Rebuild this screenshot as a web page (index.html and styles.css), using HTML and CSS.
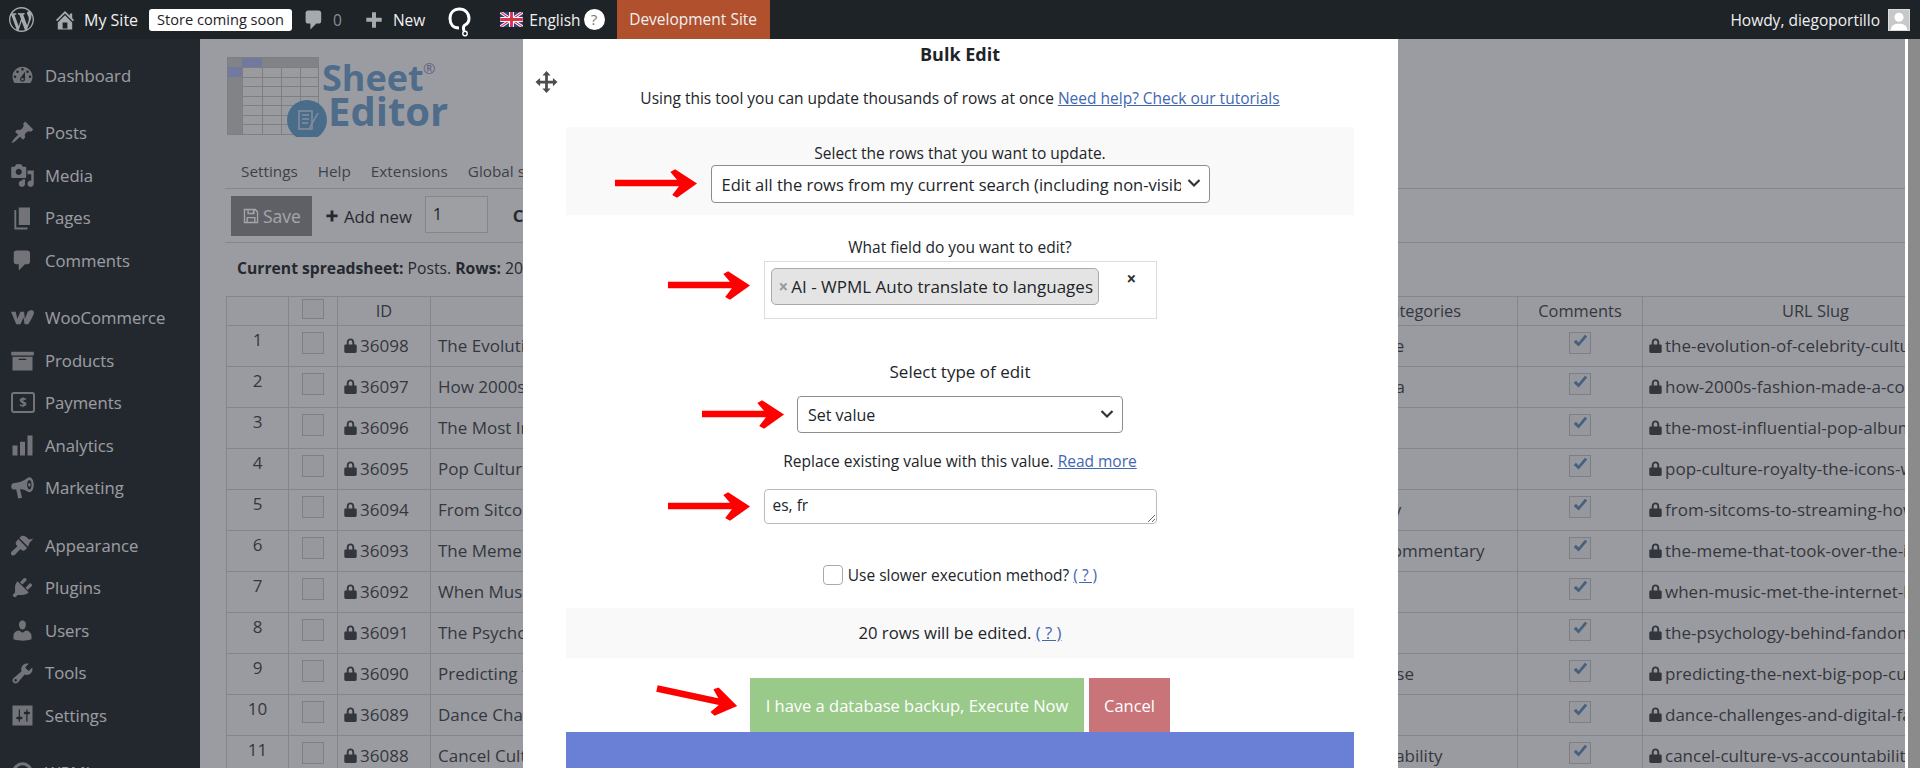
FILE: index.html
```html
<!DOCTYPE html>
<html lang="en">
<head>
<meta charset="utf-8">
<title>Bulk Edit</title>
<link rel="stylesheet" href="styles.css">
</head>
<body>
<svg class="defs" aria-hidden="true">
  <defs>
    <symbol id="i-wp" viewBox="0 0 20 20"><path d="M20 10c0-5.51-4.49-10-10-10C4.48 0 0 4.49 0 10c0 5.52 4.48 10 10 10 5.51 0 10-4.48 10-10zM7.78 15.37L4.37 6.22c.55-.02 1.17-.08 1.17-.08.5-.06.44-1.13-.06-1.11 0 0-1.45.11-2.37.11-.18 0-.37 0-.58-.01C4.12 2.69 6.87 1.11 10 1.11c2.33 0 4.45.87 6.05 2.34-.68-.11-1.65.39-1.65 1.58 0 .74.45 1.36.9 2.1.35.61.55 1.36.55 2.46 0 1.49-1.4 5-1.4 5l-3.03-8.37c.54-.02.82-.17.82-.17.5-.05.44-1.25-.06-1.22 0 0-1.44.12-2.38.12-.87 0-2.33-.12-2.33-.12-.5-.03-.56 1.2-.06 1.22l.92.08 1.26 3.41zM17.41 10c.24-.64.74-1.87.43-4.25.7 1.29 1.05 2.71 1.05 4.25 0 3.29-1.73 6.24-4.4 7.78.97-2.59 1.94-5.2 2.92-7.78zM6.1 18.09C3.12 16.65 1.11 13.53 1.11 10c0-1.3.23-2.48.72-3.59C3.25 10.3 4.67 14.2 6.1 18.09zm4.03-6.63l2.58 6.98c-.86.29-1.76.45-2.71.45-.79 0-1.57-.11-2.29-.33.81-2.38 1.62-4.74 2.42-7.1z"/></symbol>
    <symbol id="i-home" viewBox="0 0 20 20"><path d="M16 8.5l1.53 1.53-1.06 1.06L10 4.62l-6.47 6.47-1.06-1.06L10 2.5l4 4v-2h2v4zm-6-2.46l6 5.99V18H4v-5.97zM12 17v-5H8v5h4z"/></symbol>
    <symbol id="i-comment" viewBox="0 0 20 20"><path d="M5 2h9c1.1 0 2 .9 2 2v7c0 1.1-.9 2-2 2h-2l-5 5v-5H5c-1.1 0-2-.9-2-2V4c0-1.1.9-2 2-2z"/></symbol>
    <symbol id="i-plus" viewBox="0 0 20 20"><path d="M17 8v3.5h-5.2V17H8.2v-5.500H3V8h5.200V3h3.600v5z"/></symbol>
    <symbol id="i-dash" viewBox="0 0 20 20"><path d="M3.760 16h12.480c1.100-1.370 1.760-3.110 1.760-5 0-4.420-3.580-8-8-8s-8 3.580-8 8c0 1.890.660 3.630 1.760 5zM10 4c.550 0 1 .450 1 1s-.450 1-1 1-1-.450-1-1 .450-1 1-1zM6 6c.550 0 1 .450 1 1s-.450 1-1 1-1-.450-1-1 .450-1 1-1zm8 0c.550 0 1 .450 1 1s-.450 1-1 1-1-.450-1-1 .450-1 1-1zm-5.370 5.550L12 7v6c0 1.100-.900 2-2 2s-2-.900-2-2c0-.570.240-1.080.630-1.450zM4 10c.550 0 1 .450 1 1s-.450 1-1 1-1-.450-1-1 .450-1 1-1zm12 0c.550 0 1 .450 1 1s-.450 1-1 1-1-.450-1-1 .450-1 1-1zm-5 3c0-.550-.450-1-1-1s-1 .450-1 1 .450 1 1 1 1-.450 1-1z"/></symbol>
    <symbol id="i-pin" viewBox="0 0 20 20"><path d="M10.440 3.020l1.820-1.820 6.360 6.350-1.830 1.820c-1.050-.680-2.480-.570-3.410.360l-.750.750c-.920.930-1.040 2.350-.350 3.410l-1.830 1.820-2.410-2.410-2.800 2.790c-.420.420-3.380 2.710-3.800 2.290s1.860-3.390 2.280-3.810l2.790-2.790L4.100 9.360l1.830-1.820c1.050.690 2.480.570 3.400-.360l.750-.750c.930-.920 1.050-2.350.360-3.410z"/></symbol>
    <symbol id="i-media" viewBox="0 0 20 20"><path d="M13 11V4c0-.550-.450-1-1-1h-1.670L9 1H5L3.670 3H2c-.550 0-1 .450-1 1v7c0 .550.450 1 1 1h10c.550 0 1-.450 1-1zM7 4.500c1.380 0 2.500 1.120 2.500 2.500S8.380 9.500 7 9.500 4.500 8.380 4.500 7 5.620 4.500 7 4.500zM14 6h5v10.500c0 1.380-1.120 2.500-2.500 2.500S14 17.880 14 16.500s1.120-2.500 2.500-2.500c.170 0 .340.020.500.050V9h-3V6zm-4 8.050V13h2v3.500c0 1.380-1.120 2.500-2.500 2.500S7 17.880 7 16.500 8.120 14 9.500 14c.170 0 .340.020.500.050z"/></symbol>
    <symbol id="i-pages" viewBox="0 0 20 20"><path d="M7 2h9v14H7V2zM5 4v14h9v1.500H3.500V4H5z"/></symbol>
    <symbol id="i-woo" viewBox="0 0 24 16"><path d="M1 2.500h4.500l1.500 7 3-7h3.500l.8 7 2.700-7c1.500-2 5.500-2.300 6 .3.300 2-3 8-5.500 11.700h-3.500l-1-6.500-3 6.500H6z"/></symbol>
    <symbol id="i-box" viewBox="0 0 20 20"><path d="M19 3v3H1V3h18zM2 7h16v11H2V7zm11 2.500V8.500H7v1h6z"/></symbol>
    <symbol id="i-chart" viewBox="0 0 20 20"><path d="M18 18V2h-4v16h4zm-6 0V7H8v11h4zm-6 0v-8H2v8h4z"/></symbol>
    <symbol id="i-mega" viewBox="0 0 20 20"><path d="M15.500 1c2 0 3.500 2.800 3.500 6s-1.500 6-3.500 6c-.700 0-1.300-.300-1.800-.800C12.300 11 9.800 10.500 8 10.500l1.600 6.800-3 .700-1.600-7.300-1.500.1C1.800 10.800 1 10 1 8.300s.8-2.600 2.500-2.800c3.500-.200 7-1.500 10-3.600.600-.600 1.300-.900 2-.900zm0 2.200c-1 0-1.800 1.700-1.800 3.800s.8 3.800 1.800 3.800 1.800-1.700 1.800-3.800-.8-3.800-1.800-3.800zm0 2.300c.600 0 1 .700 1 1.500s-.4 1.500-1 1.500-1-.7-1-1.500.4-1.500 1-1.500z"/></symbol>
    <symbol id="i-brush" viewBox="0 0 20 20"><path d="M14.500 11L7.400 4l1.500-1.500c.5-.6 2.300-.5 3.500.3 1.200.8 2.600 2.300 2.600 2.300l3.500-.6-3 3.500zM6.600 4.800l7.100 7.100-1.700 1.700c-.8.800-2 .8-2.800 0l-.9-.9-4.300 4.700c-1 1-2.500.5-2.900-.1-.5-.8-.5-1.800.3-2.500l4.600-4.300-.9-.9c-.7-.8-.7-2 0-2.800z"/></symbol>
    <symbol id="i-plug" viewBox="0 0 20 20"><path d="M13.110 4.360L9.870 7.600 8 5.730l3.240-3.240c.350-.340 1.050-.200 1.560.320.520.510.660 1.210.310 1.550zm-8 1.770l.910-1.120 9.010 9.010-1.190.840c-.710.710-2.630 1.160-3.820 1.160H6.140L4.900 17.260c-.590.590-1.540.590-2.120 0-.590-.580-.590-1.530 0-2.120l1.240-1.240v-3.880c0-1.130.400-3.190 1.090-3.890zm7.260 3.970l3.240-3.240c.340-.350 1.040-.210 1.550.310.520.510.660 1.210.31 1.550l-3.240 3.250z"/></symbol>
    <symbol id="i-user" viewBox="0 0 20 20"><path d="M10 9.250c-2.270 0-2.730-3.440-2.730-3.440C7 4.020 7.820 2 9.970 2c2.160 0 2.980 2.020 2.710 3.810 0 0-.410 3.440-2.680 3.440zm0 2.570L12.720 10c2.390 0 4.520 2.330 4.520 4.530v2.490s-3.650 1.130-7.240 1.130c-3.650 0-7.240-1.130-7.240-1.130v-2.490c0-2.250 1.940-4.480 4.470-4.480z"/></symbol>
    <symbol id="i-wrench" viewBox="0 0 20 20"><path d="M16.680 9.770c-1.340 1.340-3.300 1.670-4.950.990l-5.410 6.520c-.990.990-2.590.990-3.580 0s-.990-2.590 0-3.570l6.520-5.420c-.680-1.650-.350-3.610.990-4.950 1.280-1.280 3.120-1.620 4.720-1.060l-2.890 2.890 2.820 2.820 2.860-2.870c.530 1.580.180 3.390-1.080 4.670zM3.810 16.210c.400.390 1.040.390 1.430 0 .400-.400.400-1.040 0-1.430-.390-.400-1.030-.400-1.430 0-.390.390-.390 1.030 0 1.430z"/></symbol>
    <symbol id="i-sliders" viewBox="0 0 20 20"><path d="M18 18V2H2v16h16zM8 11h1c.550 0 1 .450 1 1s-.450 1-1 1H8v1.500c0 .280-.220.500-.500.500s-.500-.220-.500-.500V13H6c-.550 0-1-.450-1-1s.450-1 1-1h1V5.500c0-.280.220-.500.500-.500s.500.220.500.500V11zm5-2h-1c-.550 0-1-.450-1-1s.450-1 1-1h1V5.500c0-.280.220-.500.500-.500s.500.220.500.500V7h1c.550 0 1 .450 1 1s-.450 1-1 1h-1v5.500c0 .280-.220.500-.500.500s-.500-.220-.500-.500V9z"/></symbol>
    <symbol id="i-lock" viewBox="0 0 12 14"><path d="M2.500 6V4.200C2.500 2 4 .5 6 .5s3.500 1.500 3.500 3.700V6h1c.8 0 1.300.5 1.300 1.200v5.500c0 .8-.5 1.300-1.300 1.300h-9C.7 14 .2 13.500.2 12.700V7.200C.2 6.500.7 6 1.500 6zm1.800 0h3.400V4.200C7.700 3 7 2.200 6 2.200S4.300 3 4.300 4.200z"/></symbol>
    <symbol id="i-check" viewBox="0 0 20 20"><path d="M3 10l2.500-2.500 3 3L15.500 2 18 4 8.500 15z"/></symbol>
    <symbol id="i-save" viewBox="0 0 20 20"><path d="M2 2h13l3 3v13H2V2zm1.500 1.500v13H5V11h10v5.500h1.500V5.700L14.300 3.500H14V8H6V3.500H3.500zM7.500 3.500v3H12v-3H7.500zM6.500 12.500v4h7v-4h-7z"/></symbol>
    <symbol id="i-move" viewBox="0 0 24 24"><path d="M12 0l4.500 5H13.500v5.500H19V7.500l5 4.500-5 4.500v-3h-5.500V19h3L12 24l-4.500-5h3v-5.500H5v3L0 12l5-4.500v3h5.500V5h-3z"/></symbol>
    <symbol id="i-chev" viewBox="0 0 14 10"><path d="M1.500 2l5.500 5.500L12.500 2" fill="none" stroke="currentColor" stroke-width="2.200"/></symbol>
    <symbol id="i-arrow" viewBox="0 0 88 30"><path d="M1 11h65L59 3l5-3 23 15-21 15-5-3 7-9H1z"/></symbol>
  </defs>
</svg>

<header class="adminbar">
  <svg class="ab-wp"><use href="#i-wp"/></svg>
  <svg class="ab-home"><use href="#i-home"/></svg>
  <span class="ab-site">My Site</span>
  <span class="ab-store">Store coming soon</span>
  <svg class="ab-comment"><use href="#i-comment"/></svg>
  <span class="ab-count">0</span>
  <svg class="ab-plus"><use href="#i-plus"/></svg>
  <span class="ab-new">New</span>
  <svg class="ab-wpml" viewBox="0 0 24 30"><path d="M11 21C5 21 2 17 2 11.500 2 5.500 6 2 11.500 2 17 2 21 6 21 11.500c0 3.500-2 5.500-4 6.500-1.500 1-2 3-1 6" fill="none" stroke="#fff" stroke-width="3"/><circle cx="17" cy="26.500" r="2.200" fill="none" stroke="#fff" stroke-width="1.400"/></svg>
  <svg class="ab-flag" viewBox="0 0 24 16"><rect width="24" height="16" fill="#2b3f8f"/><path d="M0 0l24 16M24 0L0 16" stroke="#fff" stroke-width="3.200"/><path d="M0 0l24 16M24 0L0 16" stroke="#d8324a" stroke-width="1.200"/><path d="M12 0v16M0 8h24" stroke="#fff" stroke-width="5.200"/><path d="M12 0v16M0 8h24" stroke="#d8324a" stroke-width="3"/></svg>
  <span class="ab-lang">English</span>
  <span class="ab-help">?</span>
  <span class="ab-dev">Development Site</span>
  <span class="ab-howdy">Howdy, diegoportillo</span>
  <span class="ab-avatar"><svg viewBox="0 0 22 22"><circle cx="11" cy="8" r="5" fill="#fff"/><path d="M2 22c0-5 4-7 9-7s9 2 9 7z" fill="#fff"/></svg></span>
</header>

<div class="main">
  <nav class="sidebar">
    <a class="menu-item"><svg><use href="#i-dash"/></svg>Dashboard</a>
    <div class="menu-sep"></div>
    <a class="menu-item"><svg><use href="#i-pin"/></svg>Posts</a>
    <a class="menu-item"><svg><use href="#i-media"/></svg>Media</a>
    <a class="menu-item"><svg><use href="#i-pages"/></svg>Pages</a>
    <a class="menu-item"><svg><use href="#i-comment"/></svg>Comments</a>
    <div class="menu-sep"></div>
    <a class="menu-item"><svg><use href="#i-woo"/></svg>WooCommerce</a>
    <a class="menu-item"><svg><use href="#i-box"/></svg>Products</a>
    <a class="menu-item"><span class="pay-icon">$</span>Payments</a>
    <a class="menu-item"><svg><use href="#i-chart"/></svg>Analytics</a>
    <a class="menu-item"><svg><use href="#i-mega"/></svg>Marketing</a>
    <div class="menu-sep"></div>
    <a class="menu-item"><svg><use href="#i-brush"/></svg>Appearance</a>
    <a class="menu-item"><svg><use href="#i-plug"/></svg>Plugins</a>
    <a class="menu-item"><svg><use href="#i-user"/></svg>Users</a>
    <a class="menu-item"><svg><use href="#i-wrench"/></svg>Tools</a>
    <a class="menu-item"><svg><use href="#i-sliders"/></svg>Settings</a>
    <div class="menu-sep"></div>
    <a class="menu-item"><svg viewBox="0 0 20 20"><circle cx="10" cy="10" r="7" fill="none" stroke="currentColor" stroke-width="2.500"/></svg>WPML</a>
  </nav>

  <div class="content">
    <div class="logo">
      <svg class="logo-svg" viewBox="0 0 225 80">
        <g fill="none" stroke="#bdbdbd" stroke-width="1">
          <rect x="0.500" y="0.500" width="91" height="77" fill="#eeeeee"/>
          <path d="M15.500 0v78M35.500 0v78M54.500 0v78M73.500 0v78M0 10.500h92M0 20.500h92M0 29.500h92M0 39.500h92M0 48.500h92M0 58.500h92M0 67.500h92"/>
        </g>
        <rect x="1" y="1" width="14" height="76" fill="#c4c4c4"/>
        <rect x="15" y="1" width="76" height="9" fill="#c4c4c4"/>
        <rect x="15" y="1" width="20" height="9" fill="#a5b4ec"/>
        <rect x="1" y="10" width="14" height="10" fill="#a5b4ec"/>
        <circle cx="80" cy="63" r="20" fill="#5f9bcb"/>
        <path d="M72 54h13v18H72z" fill="none" stroke="#c9d6e6" stroke-width="1.500"/>
        <path d="M75 58h7M75 62h7M75 66h6M82 72l9-16" stroke="#c9d6e6" stroke-width="1.500"/>
        <text class="logo-text" x="95" y="34">Sheet</text>
        <text class="logo-text logo-text-lg" x="101" y="69">Editor</text>
        <text class="logo-reg" x="196" y="17">®</text>
      </svg>
    </div>
    <div class="subnav"><span>Settings</span><span>Help</span><span>Extensions</span><span>Global sort</span></div>
    <div class="toolbar">
      <button class="save-btn"><svg><use href="#i-save"/></svg>Save</button>
      <span class="add-new"><svg><use href="#i-plus"/></svg>Add new</span>
      <span class="num-input">1</span>
      <span class="tool-c">C</span>
    </div>
    <p class="current"><b>Current spreadsheet:</b> Posts. <b>Rows:</b> 20</p>
    <table class="sheet">
      <colgroup><col class="c-num"><col class="c-cb"><col class="c-id"><col class="c-title"><col class="c-cat"><col class="c-com"><col class="c-slug"></colgroup>
      <thead>
        <tr><th></th><th><span class="cb cb-head"></span></th><th>ID</th><th></th><th>Categories</th><th>Comments</th><th>URL Slug</th></tr>
      </thead>
      <tbody>
        <tr><td class="num">1</td><td class="cbc"><span class="cb"></span></td><td><svg class="lock"><use href="#i-lock"/></svg>36098</td><td>The Evolution of Celebrity Culture</td><td>Influence</td><td class="cbc"><span class="cb on"><svg><use href="#i-check"/></svg></span></td><td><svg class="lock"><use href="#i-lock"/></svg>the-evolution-of-celebrity-culture</td></tr>
        <tr><td class="num">2</td><td class="cbc"><span class="cb"></span></td><td><svg class="lock"><use href="#i-lock"/></svg>36097</td><td>How 2000s Fashion Made a Comeback</td><td>Nostalgia</td><td class="cbc"><span class="cb on"><svg><use href="#i-check"/></svg></span></td><td><svg class="lock"><use href="#i-lock"/></svg>how-2000s-fashion-made-a-comeback</td></tr>
        <tr><td class="num">3</td><td class="cbc"><span class="cb"></span></td><td><svg class="lock"><use href="#i-lock"/></svg>36096</td><td>The Most Influential Pop Albums</td><td>Music</td><td class="cbc"><span class="cb on"><svg><use href="#i-check"/></svg></span></td><td><svg class="lock"><use href="#i-lock"/></svg>the-most-influential-pop-albums</td></tr>
        <tr><td class="num">4</td><td class="cbc"><span class="cb"></span></td><td><svg class="lock"><use href="#i-lock"/></svg>36095</td><td>Pop Culture Royalty</td><td>Icons</td><td class="cbc"><span class="cb on"><svg><use href="#i-check"/></svg></span></td><td><svg class="lock"><use href="#i-lock"/></svg>pop-culture-royalty-the-icons-who</td></tr>
        <tr><td class="num">5</td><td class="cbc"><span class="cb"></span></td><td><svg class="lock"><use href="#i-lock"/></svg>36094</td><td>From Sitcoms to Streaming</td><td>Celebrity</td><td class="cbc"><span class="cb on"><svg><use href="#i-check"/></svg></span></td><td><svg class="lock"><use href="#i-lock"/></svg>from-sitcoms-to-streaming-how</td></tr>
        <tr><td class="num">6</td><td class="cbc"><span class="cb"></span></td><td><svg class="lock"><use href="#i-lock"/></svg>36093</td><td>The Meme That Took Over</td><td>Social Commentary</td><td class="cbc"><span class="cb on"><svg><use href="#i-check"/></svg></span></td><td><svg class="lock"><use href="#i-lock"/></svg>the-meme-that-took-over-the-internet</td></tr>
        <tr><td class="num">7</td><td class="cbc"><span class="cb"></span></td><td><svg class="lock"><use href="#i-lock"/></svg>36092</td><td>When Music Met the Internet</td><td>Music</td><td class="cbc"><span class="cb on"><svg><use href="#i-check"/></svg></span></td><td><svg class="lock"><use href="#i-lock"/></svg>when-music-met-the-internet-how</td></tr>
        <tr><td class="num">8</td><td class="cbc"><span class="cb"></span></td><td><svg class="lock"><use href="#i-lock"/></svg>36091</td><td>The Psychology Behind Fandoms</td><td>Fandom</td><td class="cbc"><span class="cb on"><svg><use href="#i-check"/></svg></span></td><td><svg class="lock"><use href="#i-lock"/></svg>the-psychology-behind-fandoms</td></tr>
        <tr><td class="num">9</td><td class="cbc"><span class="cb"></span></td><td><svg class="lock"><use href="#i-lock"/></svg>36090</td><td>Predicting the Next Big Pop Culture</td><td>Metaverse</td><td class="cbc"><span class="cb on"><svg><use href="#i-check"/></svg></span></td><td><svg class="lock"><use href="#i-lock"/></svg>predicting-the-next-big-pop-culture</td></tr>
        <tr><td class="num">10</td><td class="cbc"><span class="cb"></span></td><td><svg class="lock"><use href="#i-lock"/></svg>36089</td><td>Dance Challenges and Digital Fame</td><td>Dance</td><td class="cbc"><span class="cb on"><svg><use href="#i-check"/></svg></span></td><td><svg class="lock"><use href="#i-lock"/></svg>dance-challenges-and-digital-fame</td></tr>
        <tr><td class="num">11</td><td class="cbc"><span class="cb"></span></td><td><svg class="lock"><use href="#i-lock"/></svg>36088</td><td>Cancel Culture vs Accountability</td><td>Accountability</td><td class="cbc"><span class="cb on"><svg><use href="#i-check"/></svg></span></td><td><svg class="lock"><use href="#i-lock"/></svg>cancel-culture-vs-accountability-in</td></tr>
      </tbody>
    </table>
  </div>

  <div class="overlay"></div>
  <div class="scrollbar"><span class="scroll-thumb"></span></div>

  <section class="modal">
    <svg class="move-icon"><use href="#i-move"/></svg>
    <h2 class="modal-title">Bulk Edit</h2>
    <p class="intro">Using this tool you can update thousands of rows at once <a href="#">Need help? Check our tutorials</a></p>
    <div class="band band-rows">
      <label class="lbl">Select the rows that you want to update.</label>
      <div class="select-wrap wide">
        <select class="sel"><option>Edit all the rows from my current search (including non-visible rows)</option></select>
        <svg class="chev"><use href="#i-chev"/></svg>
      </div>
    </div>
    <label class="lbl lbl-field">What field do you want to edit?</label>
    <div class="field-box">
      <span class="chip"><span class="chip-x">×</span>AI - WPML Auto translate to languages</span>
      <span class="clear-x">×</span>
    </div>
    <label class="lbl lbl-type">Select type of edit</label>
    <div class="select-wrap narrow">
      <select class="sel"><option>Set value</option></select>
      <svg class="chev"><use href="#i-chev"/></svg>
    </div>
    <p class="lbl lbl-replace">Replace existing value with this value. <a href="#">Read more</a></p>
    <textarea class="value-area">es, fr</textarea>
    <label class="slow-row"><input type="checkbox" class="slow-cb"><span>Use slower execution method? <a href="#">( ? )</a></span></label>
    <div class="band band-count">20 rows will be edited. <a href="#">( ? )</a></div>
    <div class="actions">
      <button class="btn btn-go">I have a database backup, Execute Now</button>
      <button class="btn btn-cancel">Cancel</button>
    </div>
    <div class="blue-bar"></div>
    <svg class="arrow a1"><use href="#i-arrow"/></svg>
    <svg class="arrow a2"><use href="#i-arrow"/></svg>
    <svg class="arrow a3"><use href="#i-arrow"/></svg>
    <svg class="arrow a4"><use href="#i-arrow"/></svg>
    <svg class="arrow a5"><use href="#i-arrow"/></svg>
  </section>
</div>
</body>
</html>
```
FILE: styles.css
```css
* { box-sizing: border-box; }
html, body { margin: 0; height: 768px; overflow: hidden; }
body {
  display: flex;
  flex-direction: column;
  font-family: "Open Sans", "Noto Sans", sans-serif;
  font-size: 15.5px;
  color: #212529;
  background: #f0f0f1;
}
.defs { position: absolute; width: 0; height: 0; }

/* admin bar */
.adminbar {
  flex: 0 0 39px;
  display: flex;
  align-items: center;
  background: #1d2327;
  color: #f0f0f1;
  font-size: 15.5px;
  position: relative;
  z-index: 5;
}
.adminbar svg { fill: #a7aaad; flex: none; }
.ab-wp { width: 25px; height: 25px; margin-left: 9px; }
.ab-home { width: 24px; height: 24px; margin-left: 19px; }
.ab-site { margin-left: 7px; font-size: 16px; white-space: nowrap; }
.ab-store {
  margin-left: 11px;
  width: 143px;
  height: 22px;
  line-height: 21px;
  background: #fff;
  color: #1d2327;
  border-radius: 3px;
  text-align: center;
  font-size: 14.6px;
  white-space: nowrap;
}
.ab-comment { width: 24px; height: 24px; margin-left: 10px; }
.ab-count { margin-left: 7px; color: #8c8f94; }
.ab-plus { width: 22px; height: 22px; margin-left: 21px; }
.ab-new { margin-left: 8px; }
.ab-wpml { width: 24px; height: 30px; margin-left: 23px; margin-top: 4px; fill: none; }
.ab-flag { width: 23px; height: 15px; margin-left: 28px; }
.ab-lang { margin-left: 6px; }
.ab-help {
  width: 21px; height: 21px; margin-left: 3px;
  border-radius: 50%;
  background: #fff; color: #777;
  text-align: center; line-height: 21px; font-size: 15px;
}
.ab-dev {
  margin-left: 12px;
  width: 153px;
  height: 39px;
  line-height: 39px;
  text-align: center;
  background: #b0502d;
  white-space: nowrap;
}
.ab-howdy { margin-left: auto; white-space: nowrap; }
.ab-avatar {
  width: 22px; height: 22px; margin: 0 10px 0 8px;
  background: #c8c8c8;
  border: 1px solid #ddd;
  overflow: hidden;
}
.ab-avatar svg { display: block; width: 100%; height: 100%; }

/* main */
.main { flex: 1; min-height: 0; display: flex; position: relative; overflow: hidden; }
.sidebar {
  flex: 0 0 200px;
  background: #1d2327;
  padding-top: 15px;
  color: #f0f0f1;
  font-size: 16.7px;
}
.menu-item {
  display: flex;
  align-items: center;
  height: 42.6px;
  padding-left: 45px;
  position: relative;
  white-space: nowrap;
}
.menu-item svg {
  position: absolute;
  left: 10px;
  top: 9px;
  width: 25px;
  height: 25px;
  fill: #a7aaad;
  color: #a7aaad;
}
.pay-icon {
  position: absolute;
  left: 11px;
  top: 11px;
  width: 24px;
  height: 21px;
  border: 2px solid #a7aaad;
  border-radius: 3px;
  color: #a7aaad;
  font-size: 13px;
  font-weight: 700;
  line-height: 17px;
  text-align: center;
}
.menu-sep { height: 14.6px; }

.content { flex: 1; min-width: 0; overflow: hidden; padding: 18px 0 0 25px; }
.logo { height: 78px; margin-left: 2px; }
.logo-svg { display: block; width: 225px; height: 80px; }
.logo-text { font: 700 36px "Open Sans", sans-serif; fill: #6a9dc9; }
.logo-text-lg { font-size: 40px; }
.logo-reg { font: 400 15px "Open Sans", sans-serif; fill: #88b; }
.subnav {
  display: flex;
  gap: 20px;
  height: 54px;
  padding: 23px 0 0 16px;
  line-height: 26px;
  border-bottom: 1px solid #c8c8c8;
  font-size: 15.3px;
  color: #4a4f55;
  white-space: nowrap;
}
.toolbar {
  display: flex;
  align-items: flex-start;
  height: 54px;
  padding: 7px 0 0 6px;
  border-bottom: 1px solid #c8c8c8;
  font-size: 16.7px;
}
.save-btn {
  display: flex;
  align-items: center;
  gap: 3px;
  width: 81px;
  height: 40px;
  padding: 0 0 0 11px;
  border: 0;
  background: #868689;
  color: #fff;
  font: inherit;
  font-size: 17.500px;
}
.save-btn svg { width: 18px; height: 18px; fill: #fff; }
.add-new { display: flex; align-items: center; height: 40px; margin-left: 12px; gap: 4px; }
.add-new svg { width: 16px; height: 18px; fill: #212529; }
.num-input {
  width: 63px;
  height: 37px;
  margin-left: 13px;
  padding-left: 7px;
  border: 1px solid #c8c8c8;
  background: #f5f5f5;
  line-height: 34px;
}
.tool-c { margin-left: 25px; font-weight: 700; line-height: 40px; }
.current { margin: 0; height: 53px; padding: 13px 0 0 12px; line-height: 24px; font-size: 15.7px; white-space: nowrap; }

.sheet {
  margin-left: 1px;
  width: 1762px;
  table-layout: fixed;
  border-collapse: collapse;
  background: #eeeeef;
  font-size: 17px;
  color: #3a3d44;
}
.c-num { width: 62px; }
.c-cb { width: 49px; }
.c-id { width: 93px; }
.c-title { width: 893px; }
.c-cat { width: 194px; }
.c-com { width: 125px; }
.c-slug { width: 346px; }
.sheet th, .sheet td {
  border: 1px solid #c8c8c8;
  font-weight: 400;
  overflow: hidden;
  white-space: nowrap;
  padding: 0 7px 2px;
}
.sheet thead tr { height: 29px; }
.sheet tbody tr { height: 41px; }
.sheet th { text-align: center; font-size: 16.4px; }
.sheet .num { text-align: center; vertical-align: top; padding-top: 2px; }
.sheet .cbc { text-align: center; vertical-align: top; padding-top: 6px; }
.lock { width: 13px; height: 15px; margin-right: 3px; margin-left: -1px; fill: #3a3d44; vertical-align: -1px; }
.cb {
  display: inline-block;
  width: 22px;
  height: 22px;
  border: 1px solid #bdbdbd;
  background: #e9e9ea;
  vertical-align: top;
}
.cb-head { height: 20px; margin-top: 0; }
.cb svg { display: block; width: 18px; height: 18px; margin: 0 0 0 1px; fill: #5a86b8; }

.overlay { position: absolute; inset: 0; background: rgba(43, 46, 56, 0.43); z-index: 2; }
.scrollbar { position: absolute; top: 0; right: 0; bottom: 0; width: 15px; background: #fff; z-index: 3; }
.scroll-thumb { position: absolute; top: 0; bottom: 0; right: 0; width: 12px; background: #8b8b8b; }

/* modal */
.modal {
  position: absolute;
  left: 523px;
  top: 0;
  width: 875px;
  height: 729px;
  padding: 0 44px 0 43px;
  overflow: hidden;
  background: #fff;
  z-index: 4;
  text-align: center;
  font-size: 15.5px;
}
.modal a { color: #4267b2; text-decoration: underline; }
.move-icon { position: absolute; left: 12px; top: 32px; width: 23px; height: 22px; fill: #4d4d4d; }
.modal-title { margin: 0; height: 30px; line-height: 30px; font-size: 18px; font-weight: 700; color: #1f2327; }
.intro { margin: 19px 0 0; height: 22px; line-height: 20px; }
.band { background: #f9f9f9; }
.band-rows { height: 88px; margin-top: 17px; padding-top: 16px; }
.lbl { display: block; margin: 0; height: 22px; line-height: 20px; }
.select-wrap { position: relative; margin: 0 auto; }
.wide { width: 499px; height: 38px; font-size: 16.5px; }
.narrow { width: 326px; height: 37px; margin-top: 13px; font-size: 16px; }
.sel {
  display: block;
  width: 100%;
  height: 100%;
  appearance: none;
  padding: 0 28px 0 10px;
  background: #fff;
  border: 1px solid #8d8d8d;
  border-radius: 4px;
  font-family: inherit;
  font-size: inherit;
  color: #212529;
}
.chev { position: absolute; right: 9px; top: 13px; width: 14px; height: 10px; color: #333; }
.lbl-field { margin-top: 22px; }
.field-box {
  position: relative;
  width: 393px;
  height: 58px;
  margin: 2px auto 0;
  padding: 6px;
  border: 1px solid #ddd;
  text-align: left;
}
.chip {
  display: block;
  width: 328px;
  height: 37px;
  padding-left: 7px;
  border: 1px solid #aaa;
  border-radius: 5px;
  background: #e4e4e4;
  line-height: 35px;
  font-size: 17px;
  white-space: nowrap;
}
.chip-x { color: #999; font-weight: 700; margin-right: 3px; }
.clear-x { position: absolute; left: 362px; top: 6px; font-weight: 700; font-size: 17px; line-height: 22px; color: #333; }
.lbl-type { margin-top: 42px; font-size: 17px; line-height: 22px; }
.lbl-replace { margin-top: 18px; }
.value-area {
  display: block;
  width: 393px;
  height: 35px;
  margin: 16px auto 0;
  padding: 4px 8px;
  border: 1px solid #bbb;
  border-radius: 4px;
  font: inherit;
  font-size: 15.5px;
  color: #212529;
  overflow: hidden;
}
.slow-row {
  display: flex;
  justify-content: center;
  align-items: center;
  gap: 5px;
  height: 20px;
  margin-top: 41px;
}
.slow-cb {
  appearance: none;
  width: 20px;
  height: 20px;
  margin: 0;
  border: 1px solid #aaa;
  border-radius: 4px;
  background: #fff;
}
.band-count { height: 50px; margin-top: 23px; line-height: 50px; font-size: 16.7px; }
.actions { display: flex; justify-content: center; gap: 5px; height: 54px; margin-top: 20px; }
.btn { border: 0; padding: 0; color: #fff; font: inherit; font-size: 16.5px; }
.btn-go { width: 334px; background: #9aca8a; }
.btn-cancel { width: 81px; background: #c97478; }
.blue-bar { height: 60px; background: #6a80d6; }

.arrow { position: absolute; width: 84px; height: 29px; fill: #f00; stroke: #fff; stroke-width: 3px; paint-order: stroke; overflow: visible; }
.a1 { left: 91px; top: 130px; }
.a2 { left: 144px; top: 232px; }
.a3 { left: 178px; top: 361px; }
.a4 { left: 144px; top: 453px; }
.a5 { left: 132px; top: 644px; transform: rotate(12deg); }
```
